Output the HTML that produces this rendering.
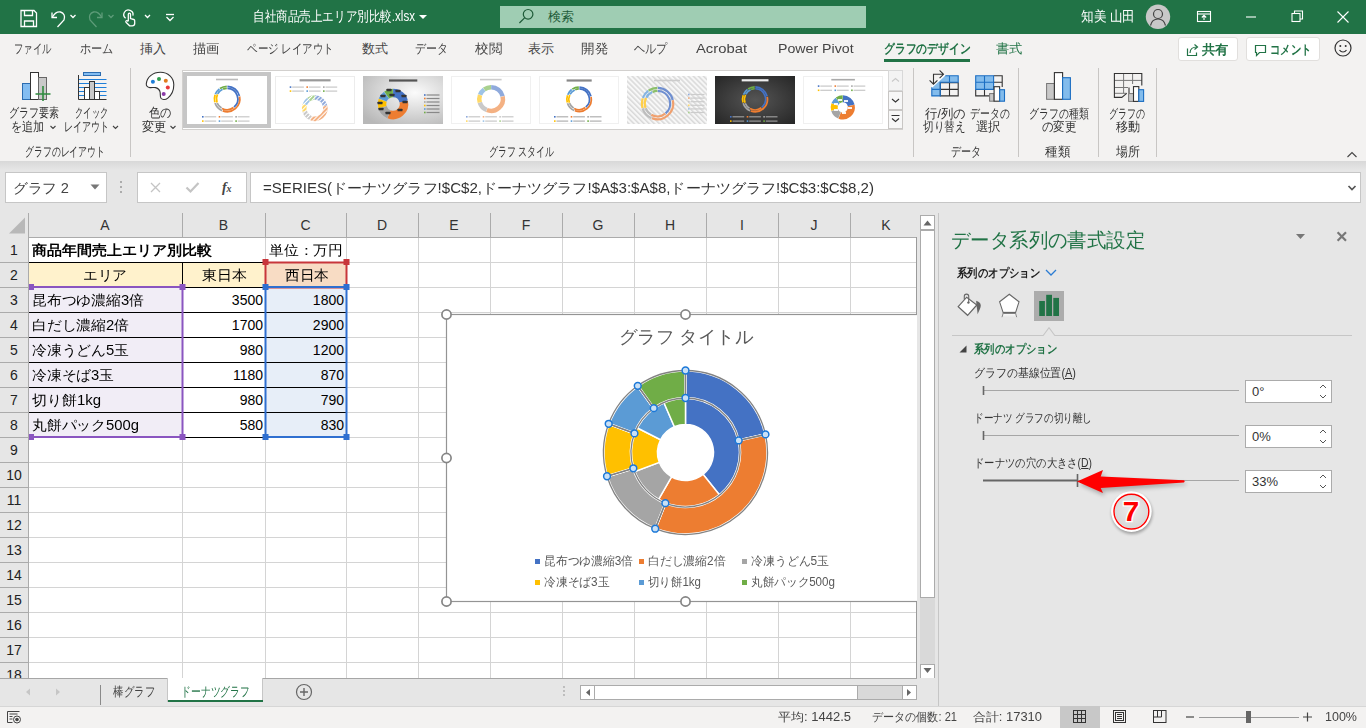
<!DOCTYPE html><html><head><meta charset="utf-8"><style>
html,body{margin:0;padding:0;width:1366px;height:728px;overflow:hidden;background:#f3f2f1;font-family:"Liberation Sans", sans-serif;}
div{position:absolute;box-sizing:border-box;}
svg{position:absolute;}
</style></head><body>
<div style="left:0px;top:0px;width:1366px;height:34px;background:#217346"></div>
<svg style="left:0;top:0" width="240" height="34" viewBox="0 0 240 34">
<g fill="none" stroke="#fff" stroke-width="1.3">
<path d="M21 10.5h13l2.5 2.5v13.5h-15.5z"/><path d="M24.5 10.5v5h8v-5"/><path d="M24.5 26.5v-5.5h9v5.5"/>
<path d="M52 12.5v5h5"/><path d="M52.5 17c2-3.5 5-5.5 8-5 3.5 .8 5 4.5 3.5 8l-6.5 7"/>
<path d="M70.5 15l2.5 2.5 2.5-2.5"/>
<g stroke="#5e9c79"><path d="M102 12.5v5h-5"/><path d="M101.5 17c-2-3.5-5-5.5-8-5-3.5 .8-5 4.5-3.5 8l6.5 7"/><path d="M108.5 15l2.5 2.5 2.5-2.5"/></g>
<path d="M125.6 18.2a4.6 4.6 0 1 1 7.3-2.6"/><path d="M128.3 21.2V14.3a1.1 1.1 0 0 1 2.2 0V18.6l3.3 .9a1.2 1.2 0 0 1 .9 1.2V23.6a2.4 2.4 0 0 1-2.4 2.2H129.6l-3.6-3.6a1 1 0 0 1 1.4-1.4l.9 .8"/>
<path d="M145 15l2.5 2.5 2.5-2.5"/>
<path d="M166 14.5h8"/><path d="M166.5 17l3.5 3.5 3.5-3.5"/>
</g></svg>
<div class="t" style="left:253.0px;top:7px;height:18px;line-height:18px;white-space:nowrap;color:#fff;font-size:14px;transform:scaleX(0.8265);transform-origin:0 0">自社商品売上エリア別比較.xlsx</div>
<svg style="left:418;top:14px" width="10" height="6"><path d="M1 1l4 4 4-4z" fill="#fff"/></svg>
<div style="left:500px;top:6px;width:366px;height:22px;background:#9fcdb3"></div>
<svg style="left:518px;top:7px" width="18" height="18" viewBox="0 0 18 18"><g fill="none" stroke="#1d5a37" stroke-width="1.2"><circle cx="10.1" cy="7.3" r="4.8"/><path d="M6.6 10.8L1.4 16"/></g></svg>
<div class="t" style="left:548.0px;top:8px;height:18px;line-height:18px;white-space:nowrap;color:#1d5a37;font-size:13px;transform:scaleX(1.0000);transform-origin:0 0">検索</div>
<div class="t" style="left:1081.0px;top:7px;height:18px;line-height:18px;white-space:nowrap;color:#fff;font-size:14px;transform:scaleX(0.9016);transform-origin:0 0">知美 山田</div>
<svg style="left:1140px;top:4px" width="36" height="26" viewBox="0 0 36 26"><circle cx="18" cy="12.8" r="12.2" fill="#c8c8c8"/><g fill="none" stroke="#444" stroke-width="1.2"><circle cx="18" cy="10" r="4.5"/><path d="M10.5 21.5c1-4.5 4-6.5 7.5-6.5s6.5 2 7.5 6.5"/></g></svg>
<svg style="left:1180px;top:0" width="186" height="34" viewBox="1180 0 186 34"><g fill="none" stroke="#fff" stroke-width="1.1">
<rect x="1197.5" y="11.5" width="13" height="10"/><path d="M1197.5 14h13"/><path d="M1204 20v-4.5M1201.8 17.5l2.2-2.2 2.2 2.2"/>
<path d="M1246 17h10"/>
<rect x="1292" y="13.5" width="8" height="8"/><path d="M1294.5 13.5v-2.5h8v8h-2.5"/>
<path d="M1337.5 11.5l11 11M1348.5 11.5l-11 11"/>
</g></svg>
<div class="t" style="left:13.5px;top:40px;height:18px;line-height:18px;white-space:nowrap;color:#444;font-size:13px;transform:scaleX(0.7231);transform-origin:0 0">ファイル</div>
<div class="t" style="left:79.5px;top:40px;height:18px;line-height:18px;white-space:nowrap;color:#444;font-size:13px;transform:scaleX(0.8641);transform-origin:0 0">ホーム</div>
<div class="t" style="left:139.5px;top:40px;height:18px;line-height:18px;white-space:nowrap;color:#444;font-size:13px;transform:scaleX(1.0000);transform-origin:0 0">挿入</div>
<div class="t" style="left:192.5px;top:40px;height:18px;line-height:18px;white-space:nowrap;color:#444;font-size:13px;transform:scaleX(1.0192);transform-origin:0 0">描画</div>
<div class="t" style="left:246.9px;top:40px;height:18px;line-height:18px;white-space:nowrap;color:#444;font-size:13px;transform:scaleX(0.8084);transform-origin:0 0">ページ レイアウト</div>
<div class="t" style="left:362.3px;top:40px;height:18px;line-height:18px;white-space:nowrap;color:#444;font-size:13px;transform:scaleX(1.0000);transform-origin:0 0">数式</div>
<div class="t" style="left:414.5px;top:40px;height:18px;line-height:18px;white-space:nowrap;color:#444;font-size:13px;transform:scaleX(0.8462);transform-origin:0 0">データ</div>
<div class="t" style="left:474.5px;top:40px;height:18px;line-height:18px;white-space:nowrap;color:#444;font-size:13px;transform:scaleX(1.0385);transform-origin:0 0">校閲</div>
<div class="t" style="left:527.5px;top:40px;height:18px;line-height:18px;white-space:nowrap;color:#444;font-size:13px;transform:scaleX(1.0000);transform-origin:0 0">表示</div>
<div class="t" style="left:580.5px;top:40px;height:18px;line-height:18px;white-space:nowrap;color:#444;font-size:13px;transform:scaleX(1.0385);transform-origin:0 0">開発</div>
<div class="t" style="left:633.5px;top:40px;height:18px;line-height:18px;white-space:nowrap;color:#444;font-size:13px;transform:scaleX(0.8590);transform-origin:0 0">ヘルプ</div>
<div class="t" style="left:695.5px;top:40px;height:18px;line-height:18px;white-space:nowrap;color:#444;font-size:13px;transform:scaleX(1.1381);transform-origin:0 0">Acrobat</div>
<div class="t" style="left:777.5px;top:40px;height:18px;line-height:18px;white-space:nowrap;color:#444;font-size:13px;transform:scaleX(1.0897);transform-origin:0 0">Power Pivot</div>
<div class="t" style="left:883.5px;top:40px;height:18px;line-height:18px;white-space:nowrap;color:#217346;font-size:13px;font-weight:bold;transform:scaleX(0.8317);transform-origin:0 0">グラフのデザイン</div>
<div style="left:884px;top:59px;width:86px;height:3px;background:#217346"></div>
<div class="t" style="left:995.5px;top:40px;height:18px;line-height:18px;white-space:nowrap;color:#217346;font-size:13px;transform:scaleX(1.0192);transform-origin:0 0">書式</div>
<div style="left:1178px;top:37px;width:60px;height:24px;background:#fff;border:1px solid #e1dfdd;border-radius:3px"></div>
<svg style="left:1185px;top:42px" width="16" height="16" viewBox="0 0 16 16"><g fill="none" stroke="#217346" stroke-width="1.2"><path d="M2.5 6.5v7h9v-3"/><path d="M5 11c0-4 3-6 7-6"/><path d="M9.5 2.5l3 2.5-3 2.5"/></g></svg>
<div class="t" style="left:1201.5px;top:41px;height:18px;line-height:18px;white-space:nowrap;color:#217346;font-size:13px;font-weight:bold;transform:scaleX(1.0192);transform-origin:0 0">共有</div>
<div style="left:1246px;top:37px;width:74px;height:24px;background:#fff;border:1px solid #e1dfdd;border-radius:3px"></div>
<svg style="left:1253px;top:42px" width="16" height="16" viewBox="0 0 16 16"><g fill="none" stroke="#217346" stroke-width="1.2"><path d="M2.5 3.5h10v7h-6l-3 3v-3h-1z"/></g></svg>
<div class="t" style="left:1269.5px;top:41px;height:18px;line-height:18px;white-space:nowrap;color:#217346;font-size:13px;font-weight:bold;transform:scaleX(0.7981);transform-origin:0 0">コメント</div>
<svg style="left:1333px;top:38px" width="20" height="20" viewBox="0 0 20 20"><g fill="none" stroke="#333" stroke-width="1.2"><circle cx="10" cy="10" r="8"/><path d="M6.5 12c1 1.5 2 2 3.5 2s2.5-.5 3.5-2"/></g><circle cx="7.3" cy="8" r="1" fill="#333"/><circle cx="12.7" cy="8" r="1" fill="#333"/></svg>
<div style="left:130px;top:68px;width:1px;height:89px;background:#c8c6c4"></div>
<div style="left:913px;top:68px;width:1px;height:89px;background:#c8c6c4"></div>
<div style="left:1018px;top:68px;width:1px;height:89px;background:#c8c6c4"></div>
<div style="left:1098px;top:68px;width:1px;height:89px;background:#c8c6c4"></div>
<div style="left:1156px;top:68px;width:1px;height:89px;background:#c8c6c4"></div>
<div class="t" style="left:24.5px;top:144px;height:16px;line-height:16px;white-space:nowrap;color:#333;font-size:13px;transform:scaleX(0.6846);transform-origin:0 0">グラフのレイアウト</div>
<div class="t" style="left:488.7px;top:144px;height:16px;line-height:16px;white-space:nowrap;color:#333;font-size:13px;transform:scaleX(0.6901);transform-origin:0 0">グラフ スタイル</div>
<div class="t" style="left:950.9px;top:143.5px;height:16px;line-height:16px;white-space:nowrap;color:#333;font-size:13px;transform:scaleX(0.7744);transform-origin:0 0">データ</div>
<div class="t" style="left:1045.3px;top:143.5px;height:16px;line-height:16px;white-space:nowrap;color:#333;font-size:13px;transform:scaleX(0.9692);transform-origin:0 0">種類</div>
<div class="t" style="left:1115.5px;top:143.5px;height:16px;line-height:16px;white-space:nowrap;color:#333;font-size:13px;transform:scaleX(0.9231);transform-origin:0 0">場所</div>
<div class="t" style="left:9.3px;top:105px;height:16px;line-height:16px;white-space:nowrap;color:#333;font-size:13px;transform:scaleX(0.7723);transform-origin:0 0">グラフ要素</div>
<div class="t" style="left:11.4px;top:119px;height:16px;line-height:16px;white-space:nowrap;color:#333;font-size:13px;transform:scaleX(0.8487);transform-origin:0 0">を追加</div>
<div class="t" style="left:75.3px;top:105px;height:16px;line-height:16px;white-space:nowrap;color:#333;font-size:13px;transform:scaleX(0.6385);transform-origin:0 0">クイック</div>
<div class="t" style="left:63.6px;top:119px;height:16px;line-height:16px;white-space:nowrap;color:#333;font-size:13px;transform:scaleX(0.6954);transform-origin:0 0">レイアウト</div>
<div class="t" style="left:148.7px;top:105px;height:16px;line-height:16px;white-space:nowrap;color:#333;font-size:13px;transform:scaleX(0.8654);transform-origin:0 0">色の</div>
<div class="t" style="left:141.5px;top:119px;height:16px;line-height:16px;white-space:nowrap;color:#333;font-size:13px;transform:scaleX(0.9385);transform-origin:0 0">変更</div>
<div class="t" style="left:924.5px;top:105.5px;height:16px;line-height:16px;white-space:nowrap;color:#333;font-size:13px;transform:scaleX(0.9525);transform-origin:0 0">行/列の</div>
<div class="t" style="left:923.4px;top:119px;height:16px;line-height:16px;white-space:nowrap;color:#333;font-size:13px;transform:scaleX(0.8135);transform-origin:0 0">切り替え</div>
<div class="t" style="left:969.5px;top:105.5px;height:16px;line-height:16px;white-space:nowrap;color:#333;font-size:13px;transform:scaleX(0.7596);transform-origin:0 0">データの</div>
<div class="t" style="left:976.1px;top:119px;height:16px;line-height:16px;white-space:nowrap;color:#333;font-size:13px;transform:scaleX(0.9538);transform-origin:0 0">選択</div>
<div class="t" style="left:1028.5px;top:105.5px;height:16px;line-height:16px;white-space:nowrap;color:#333;font-size:13px;transform:scaleX(0.7628);transform-origin:0 0">グラフの種類</div>
<div class="t" style="left:1041.5px;top:119px;height:16px;line-height:16px;white-space:nowrap;color:#333;font-size:13px;transform:scaleX(0.8846);transform-origin:0 0">の変更</div>
<div class="t" style="left:1109.0px;top:105.5px;height:16px;line-height:16px;white-space:nowrap;color:#333;font-size:13px;transform:scaleX(0.6942);transform-origin:0 0">グラフの</div>
<div class="t" style="left:1115.5px;top:119px;height:16px;line-height:16px;white-space:nowrap;color:#333;font-size:13px;transform:scaleX(0.9308);transform-origin:0 0">移動</div>
<svg style="left:0;top:120px" width="200" height="14" viewBox="0 120 200 14"><g fill="none" stroke="#444" stroke-width="1.1"><path d="M50.5 126l2.5 2.5 2.5-2.5M113 126l2.5 2.5 2.5-2.5M170.5 126l2.5 2.5 2.5-2.5"/></g></svg>
<svg style="left:0;top:60px" width="200" height="45" viewBox="0 60 200 45">
<rect x="22.5" y="83.5" width="8" height="16" fill="#83bdf1" stroke="#2b6cb0" stroke-width="1"/>
<rect x="30.5" y="72.5" width="8" height="27" fill="#fff" stroke="#333" stroke-width="1"/>
<rect x="38.5" y="77.5" width="8" height="22" fill="#c9c9c9" stroke="#666" stroke-width="1"/>
<path d="M43 86v15M35.5 94h15" stroke="#2e8b3e" stroke-width="1.6"/>
<rect x="83.5" y="72.5" width="17" height="3" fill="#83bdf1" stroke="#2b6cb0" stroke-width="1"/>
<path d="M78.5 79.5h28M78.5 83.5h28M78.5 87.5h28M78.5 91.5h28M78.5 95.5h28" stroke="#1f7fd8" stroke-width="1"/>
<path d="M78.5 75v24.5h28" fill="none" stroke="#333" stroke-width="1"/>
<rect x="84.5" y="87.5" width="5" height="12" fill="#fff" stroke="#333"/>
<rect x="89.5" y="81.5" width="5" height="18" fill="#c9c9c9" stroke="#333"/>
<rect x="94.5" y="91.5" width="5" height="8" fill="#fff" stroke="#333"/>
<path d="M160.5 72.3c7.5 0 13.3 5.5 13.3 12.5c0 6-2.5 10.5-6 13.3c-2.2 1.8-5.5 2-6.8 .2c-1-1.5-.6-3.5-.8-5.5c-.3-2.5-1.8-4.5-4.5-5.2c-2-.5-4 .3-5.8 0c-2.3-.4-3.8-2-3.6-4c.6-6.3 6.3-11.3 14.2-11.3z" fill="#fff" stroke="#333" stroke-width="1.1"/>
<circle cx="152.9" cy="81.8" r="2" fill="#1f7fd8"/><circle cx="159" cy="78.9" r="2" fill="#2e9e4e"/><circle cx="165.8" cy="80.8" r="2" fill="#e07b1e"/><circle cx="167.8" cy="87.6" r="2" fill="#e8383c"/><circle cx="163.7" cy="93.9" r="2" fill="#8a3aa8"/>
</svg>
<svg style="left:920px;top:60px" width="240" height="45" viewBox="920 60 240 45">
<path d="M944 75.8H958.2V82.3H940.3V95.9H931.8V86.5z" fill="#83bcec"/>
<g fill="none" stroke="#333" stroke-width="1.1"><path d="M940.3 82.8H958.2V95.9H940.3zM949.5 82.8V95.9M940.3 89.4H958.2"/></g>
<g fill="none" stroke="#1b6ec2" stroke-width="1.1"><path d="M944 75.8H958.2V82.3H940.3V95.9H931.8V86.5M949.5 75.8V82.3M931.8 89.4H940.3"/></g>
<path d="M931.5 87.2L945 74.8" stroke="#fff" stroke-width="1.6"/>
<g fill="none" stroke="#333" stroke-width="1.1"><path d="M933.5 83.5V74.3H943.2M939.6 70.4L943.5 74.3L939.6 78.2M929.6 80.3L933.5 84.2L937.4 80.3"/></g>
<rect x="975.7" y="75.8" width="17.9" height="13.6" fill="#83bcec"/>
<g fill="none" stroke="#333" stroke-width="1.1"><path d="M993.6 75.8H1002.2V87M993.6 82.3H1002.2M975.7 89.4V95.9H989M984.5 89.4V95.9"/></g>
<g fill="none" stroke="#1b6ec2" stroke-width="1.1"><path d="M975.7 75.8H993.6V89.4H975.7zM984.5 75.8V89.4M975.7 82.3H993.6"/></g>
<rect x="989.6" y="93.6" width="4.5" height="7.6" fill="#c8c8c8" stroke="#777" stroke-width="1"/><rect x="994.1" y="86.7" width="5.5" height="14.5" fill="#fff" stroke="#333" stroke-width="1.1"/><rect x="999.7" y="89.7" width="4.8" height="11.5" fill="#83bcec" stroke="#1b6ec2" stroke-width="1.1"/>
<rect x="1046.6" y="83.5" width="7.8" height="15.8" fill="#c8c8c8" stroke="#777" stroke-width="1"/><rect x="1054.4" y="72.6" width="8.2" height="26.7" fill="#fff" stroke="#333" stroke-width="1.1"/><rect x="1062.6" y="77.7" width="7.8" height="21.6" fill="#83bcec" stroke="#1b6ec2" stroke-width="1.1"/>
<g fill="none" stroke="#777" stroke-width="1"><path d="M1123.6 73.5V93.3M1132.6 73.5V84M1114.4 80.4H1141.8M1114.4 87.5H1128M1114.4 93.3H1126.7"/></g>
<g fill="none" stroke="#333" stroke-width="1.1"><path d="M1129 93.3V87.5M1141.8 85.5V73.5H1114.4V97.4H1121.8L1126.7 93.3"/></g>
<rect x="1128.6" y="93.6" width="4.9" height="7.8" fill="#c8c8c8" stroke="#777" stroke-width="1"/><rect x="1133.5" y="86.6" width="5.3" height="14.8" fill="#fff" stroke="#333" stroke-width="1.1"/><rect x="1138.8" y="89.7" width="4.8" height="11.7" fill="#83bcec" stroke="#1b6ec2" stroke-width="1.1"/>
</svg>
<div style="left:182px;top:70px;width:721px;height:60px;background:#fff;border:1px solid #d2d0ce"></div>
<div style="left:183px;top:72px;width:88px;height:56px;background:#c6c6c6"></div>
<svg style="left:180px;top:70px" width="710" height="60" viewBox="180 70 710 60"><defs><radialGradient id="g3" cx="65%" cy="35%" r="80%"><stop offset="0" stop-color="#fbfbfb"/><stop offset="1" stop-color="#b8b8b8"/></radialGradient><radialGradient id="g7" cx="50%" cy="50%" r="70%"><stop offset="0" stop-color="#555"/><stop offset="1" stop-color="#262626"/></radialGradient><pattern id="st" width="3.6" height="3.6" patternUnits="userSpaceOnUse" patternTransform="rotate(-45)"><rect width="3.6" height="3.6" fill="#f7f7f7"/><rect width="1.5" height="3.6" fill="#d9d9d9"/></pattern><pattern id="hx" width="3" height="3" patternUnits="userSpaceOnUse" patternTransform="rotate(45)"><rect width="3" height="3" fill="#fff" opacity="0"/><rect width="1" height="3" fill="#fff"/></pattern></defs>
<rect x="187" y="76" width="80" height="48" fill="#fff"/><rect x="216" y="78.7" width="22" height="1.6" fill="#bbb"/><path d="M227.38 88.30A10.7 10.7 0 0 1 234.01 107.17" stroke="#4472c4" stroke-width="1.8" fill="none"/><path d="M233.58 107.52A10.7 10.7 0 0 1 222.02 108.42" stroke="#ed7d31" stroke-width="1.8" fill="none"/><path d="M221.53 108.14A10.7 10.7 0 0 1 217.18 103.02" stroke="#a5a5a5" stroke-width="1.8" fill="none"/><path d="M216.99 102.50A10.7 10.7 0 0 1 217.45 94.39" stroke="#ffc000" stroke-width="1.8" fill="none"/><path d="M217.70 93.89A10.7 10.7 0 0 1 222.59 89.30" stroke="#5b9bd5" stroke-width="1.8" fill="none"/><path d="M223.11 89.07A10.7 10.7 0 0 1 226.82 88.30" stroke="#70ad47" stroke-width="1.8" fill="none"/><path d="M227.43 86.30A12.7 12.7 0 0 1 239.41 95.87" stroke="#4472c4" stroke-width="1.8" fill="none"/><path d="M239.56 96.52A12.7 12.7 0 0 1 222.72 110.92" stroke="#ed7d31" stroke-width="1.8" fill="none"/><path d="M222.10 110.68A12.7 12.7 0 0 1 215.05 103.00" stroke="#a5a5a5" stroke-width="1.8" fill="none"/><path d="M214.85 102.36A12.7 12.7 0 0 1 215.09 94.87" stroke="#ffc000" stroke-width="1.8" fill="none"/><path d="M215.32 94.24A12.7 12.7 0 0 1 219.44 88.87" stroke="#5b9bd5" stroke-width="1.8" fill="none"/><path d="M219.98 88.49A12.7 12.7 0 0 1 226.77 86.30" stroke="#70ad47" stroke-width="1.8" fill="none"/><rect x="202.0" y="116.0" width="1.6" height="1.6" fill="#4472c4"/><rect x="204.5" y="116.2" width="11.7" height="1.2" fill="#c8c8c8"/><rect x="218.7" y="116.0" width="1.6" height="1.6" fill="#ed7d31"/><rect x="221.2" y="116.2" width="11.7" height="1.2" fill="#c8c8c8"/><rect x="235.3" y="116.0" width="1.6" height="1.6" fill="#a5a5a5"/><rect x="237.8" y="116.2" width="11.7" height="1.2" fill="#c8c8c8"/><rect x="202.0" y="120.3" width="1.6" height="1.6" fill="#ffc000"/><rect x="204.5" y="120.5" width="11.7" height="1.2" fill="#c8c8c8"/><rect x="218.7" y="120.3" width="1.6" height="1.6" fill="#5b9bd5"/><rect x="221.2" y="120.5" width="11.7" height="1.2" fill="#c8c8c8"/><rect x="235.3" y="120.3" width="1.6" height="1.6" fill="#70ad47"/><rect x="237.8" y="120.5" width="11.7" height="1.2" fill="#c8c8c8"/><rect x="275.5" y="76.5" width="79" height="47" fill="#fff" stroke="#ececec"/><rect x="299.6" y="79.2" width="31.0" height="2.2" fill="#9a9a9a"/><rect x="289.7" y="86.3" width="1.6" height="1.6" fill="#4472c4"/><rect x="292.2" y="86.5" width="11.7" height="1.2" fill="#c8c8c8"/><rect x="306.4" y="86.3" width="1.6" height="1.6" fill="#ed7d31"/><rect x="308.9" y="86.5" width="11.7" height="1.2" fill="#c8c8c8"/><rect x="323.0" y="86.3" width="1.6" height="1.6" fill="#a5a5a5"/><rect x="325.5" y="86.5" width="11.7" height="1.2" fill="#c8c8c8"/><rect x="289.7" y="90.3" width="1.6" height="1.6" fill="#ffc000"/><rect x="292.2" y="90.5" width="11.7" height="1.2" fill="#c8c8c8"/><rect x="306.4" y="90.3" width="1.6" height="1.6" fill="#5b9bd5"/><rect x="308.9" y="90.5" width="11.7" height="1.2" fill="#c8c8c8"/><rect x="323.0" y="90.3" width="1.6" height="1.6" fill="#70ad47"/><rect x="325.5" y="90.5" width="11.7" height="1.2" fill="#c8c8c8"/><path d="M314.95 97.60A10.6 10.6 0 0 1 325.10 105.71" stroke="#8faadc" stroke-width="4.5" fill="none"/><path d="M325.17 106.00A10.6 10.6 0 0 1 311.02 118.10" stroke="#f4b183" stroke-width="4.5" fill="none"/><path d="M310.75 118.00A10.6 10.6 0 0 1 304.70 111.41" stroke="#c9c9c9" stroke-width="4.5" fill="none"/><path d="M304.61 111.13A10.6 10.6 0 0 1 304.82 104.63" stroke="#ffd966" stroke-width="4.5" fill="none"/><path d="M304.92 104.35A10.6 10.6 0 0 1 308.51 99.67" stroke="#9dc3e6" stroke-width="4.5" fill="none"/><path d="M308.75 99.50A10.6 10.6 0 0 1 314.65 97.60" stroke="#a9d18e" stroke-width="4.5" fill="none"/><circle cx="314.8" cy="108.2" r="10.6" fill="none" stroke="url(#hx)" stroke-width="4.5"/><rect x="363" y="76" width="80" height="48" fill="url(#g3)"/><rect x="389" y="79.4" width="28.30000000000001" height="2.2" fill="#555"/><path d="M393.10 93.00A11 11 0 0 1 403.71 101.48" stroke="#4472c4" stroke-width="8.5" fill="none"/><path d="M403.75 101.66A11 11 0 0 1 389.03 114.26" stroke="#ed7d31" stroke-width="8.5" fill="none"/><path d="M388.85 114.19A11 11 0 0 1 382.50 107.28" stroke="#a5a5a5" stroke-width="8.5" fill="none"/><path d="M382.44 107.09A11 11 0 0 1 382.66 100.24" stroke="#ffc000" stroke-width="8.5" fill="none"/><path d="M382.73 100.06A11 11 0 0 1 386.52 95.11" stroke="#5b9bd5" stroke-width="8.5" fill="none"/><path d="M386.67 95.00A11 11 0 0 1 392.90 93.00" stroke="#70ad47" stroke-width="8.5" fill="none"/><rect x="386.5" y="88.7" width="5" height="2.6" rx="0.6" fill="#333"/><rect x="395.5" y="89.7" width="5" height="2.6" rx="0.6" fill="#333"/><rect x="401.5" y="94.7" width="5" height="2.6" rx="0.6" fill="#333"/><rect x="402.5" y="100.7" width="5" height="2.6" rx="0.6" fill="#333"/><rect x="397.5" y="108.7" width="5" height="2.6" rx="0.6" fill="#333"/><rect x="385.5" y="111.7" width="5" height="2.6" rx="0.6" fill="#333"/><rect x="378.5" y="107.7" width="5" height="2.6" rx="0.6" fill="#333"/><rect x="377.5" y="101.7" width="5" height="2.6" rx="0.6" fill="#333"/><rect x="380.5" y="94.7" width="5" height="2.6" rx="0.6" fill="#333"/><rect x="389.5" y="93.7" width="5" height="2.6" rx="0.6" fill="#333"/><rect x="424" y="94.2" width="1.6" height="1.6" fill="#4472c4"/><rect x="426.5" y="94.4" width="13" height="1.2" fill="#888"/><rect x="424" y="97.7" width="1.6" height="1.6" fill="#ed7d31"/><rect x="426.5" y="97.9" width="13" height="1.2" fill="#888"/><rect x="424" y="101.2" width="1.6" height="1.6" fill="#a5a5a5"/><rect x="426.5" y="101.4" width="13" height="1.2" fill="#888"/><rect x="424" y="104.7" width="1.6" height="1.6" fill="#ffc000"/><rect x="426.5" y="104.9" width="13" height="1.2" fill="#888"/><rect x="424" y="108.2" width="1.6" height="1.6" fill="#5b9bd5"/><rect x="426.5" y="108.4" width="13" height="1.2" fill="#888"/><rect x="424" y="111.7" width="1.6" height="1.6" fill="#70ad47"/><rect x="426.5" y="111.9" width="13" height="1.2" fill="#888"/><rect x="451.5" y="76.5" width="79" height="47" fill="#fff" stroke="#f0f0f0"/><rect x="480" y="78.8" width="21.600000000000023" height="1.6" fill="#ccc"/><path d="M491.18 87.20A11.8 11.8 0 0 1 502.59 96.31" stroke="#8faadc" stroke-width="4.5" fill="none"/><path d="M502.63 96.47A11.8 11.8 0 0 1 486.82 110.00" stroke="#f4b183" stroke-width="4.5" fill="none"/><path d="M486.67 109.94A11.8 11.8 0 0 1 479.83 102.50" stroke="#c9c9c9" stroke-width="4.5" fill="none"/><path d="M479.78 102.34A11.8 11.8 0 0 1 480.02 94.95" stroke="#ffd966" stroke-width="4.5" fill="none"/><path d="M480.08 94.79A11.8 11.8 0 0 1 484.16 89.46" stroke="#9dc3e6" stroke-width="4.5" fill="none"/><path d="M484.30 89.36A11.8 11.8 0 0 1 491.02 87.20" stroke="#a9d18e" stroke-width="4.5" fill="none"/><rect x="466.0" y="116.0" width="1.6" height="1.6" fill="#8faadc"/><rect x="468.5" y="116.2" width="11.7" height="1.2" fill="#c8c8c8"/><rect x="482.7" y="116.0" width="1.6" height="1.6" fill="#f4b183"/><rect x="485.2" y="116.2" width="11.7" height="1.2" fill="#c8c8c8"/><rect x="499.3" y="116.0" width="1.6" height="1.6" fill="#c9c9c9"/><rect x="501.8" y="116.2" width="11.7" height="1.2" fill="#c8c8c8"/><rect x="466.0" y="120.3" width="1.6" height="1.6" fill="#ffd966"/><rect x="468.5" y="120.5" width="11.7" height="1.2" fill="#c8c8c8"/><rect x="482.7" y="120.3" width="1.6" height="1.6" fill="#9dc3e6"/><rect x="485.2" y="120.5" width="11.7" height="1.2" fill="#c8c8c8"/><rect x="499.3" y="120.3" width="1.6" height="1.6" fill="#a9d18e"/><rect x="501.8" y="120.5" width="11.7" height="1.2" fill="#c8c8c8"/><rect x="539.5" y="76.5" width="79" height="47" fill="#fff" stroke="#f0f0f0"/><rect x="566.6" y="79.4" width="25.100000000000023" height="2.2" fill="#888"/><path d="M579.37 88.95A10.35 10.35 0 0 1 585.79 107.20" stroke="#4472c4" stroke-width="1.71" fill="none"/><path d="M585.36 107.54A10.35 10.35 0 0 1 574.18 108.41" stroke="#ed7d31" stroke-width="1.71" fill="none"/><path d="M573.71 108.14A10.35 10.35 0 0 1 569.51 103.19" stroke="#a5a5a5" stroke-width="1.71" fill="none"/><path d="M569.32 102.68A10.35 10.35 0 0 1 569.76 94.84" stroke="#ffc000" stroke-width="1.71" fill="none"/><path d="M570.01 94.36A10.35 10.35 0 0 1 574.74 89.91" stroke="#5b9bd5" stroke-width="1.71" fill="none"/><path d="M575.24 89.70A10.35 10.35 0 0 1 578.83 88.95" stroke="#70ad47" stroke-width="1.71" fill="none"/><path d="M579.42 87.05A12.25 12.25 0 0 1 590.97 96.28" stroke="#4472c4" stroke-width="1.71" fill="none"/><path d="M591.11 96.91A12.25 12.25 0 0 1 574.88 110.80" stroke="#ed7d31" stroke-width="1.71" fill="none"/><path d="M574.28 110.56A12.25 12.25 0 0 1 567.47 103.15" stroke="#a5a5a5" stroke-width="1.71" fill="none"/><path d="M567.29 102.54A12.25 12.25 0 0 1 567.52 95.31" stroke="#ffc000" stroke-width="1.71" fill="none"/><path d="M567.74 94.71A12.25 12.25 0 0 1 571.71 89.53" stroke="#5b9bd5" stroke-width="1.71" fill="none"/><path d="M572.23 89.16A12.25 12.25 0 0 1 578.78 87.05" stroke="#70ad47" stroke-width="1.71" fill="none"/><rect x="554.0" y="116.0" width="1.6" height="1.6" fill="#4472c4"/><rect x="556.5" y="116.2" width="11.7" height="1.2" fill="#b0b0b0"/><rect x="570.7" y="116.0" width="1.6" height="1.6" fill="#ed7d31"/><rect x="573.2" y="116.2" width="11.7" height="1.2" fill="#b0b0b0"/><rect x="587.3" y="116.0" width="1.6" height="1.6" fill="#a5a5a5"/><rect x="589.8" y="116.2" width="11.7" height="1.2" fill="#b0b0b0"/><rect x="554.0" y="120.3" width="1.6" height="1.6" fill="#ffc000"/><rect x="556.5" y="120.5" width="11.7" height="1.2" fill="#b0b0b0"/><rect x="570.7" y="120.3" width="1.6" height="1.6" fill="#5b9bd5"/><rect x="573.2" y="120.5" width="11.7" height="1.2" fill="#b0b0b0"/><rect x="587.3" y="120.3" width="1.6" height="1.6" fill="#70ad47"/><rect x="589.8" y="120.5" width="11.7" height="1.2" fill="#b0b0b0"/><rect x="627" y="76" width="80" height="48" fill="url(#st)"/><rect x="654" y="79.7" width="26" height="1.6" fill="#ccc"/><path d="M657.72 87.90A15.7 15.7 0 0 1 672.76 99.92" stroke="#6f8fd0" stroke-width="2.2" fill="none"/><path d="M672.86 100.35A15.7 15.7 0 0 1 651.91 118.27" stroke="#f0a06e" stroke-width="2.2" fill="none"/><path d="M651.50 118.11A15.7 15.7 0 0 1 642.54 108.36" stroke="#bdbdbd" stroke-width="2.2" fill="none"/><path d="M642.41 107.94A15.7 15.7 0 0 1 642.72 98.31" stroke="#ffcf4a" stroke-width="2.2" fill="none"/><path d="M642.87 97.90A15.7 15.7 0 0 1 648.18 90.97" stroke="#84b4e2" stroke-width="2.2" fill="none"/><path d="M648.54 90.71A15.7 15.7 0 0 1 657.28 87.90" stroke="#8cc06a" stroke-width="2.2" fill="none"/><path d="M657.68 90.90A12.7 12.7 0 0 1 665.59 113.39" stroke="#6f8fd0" stroke-width="2.2" fill="none"/><path d="M665.31 113.62A12.7 12.7 0 0 1 651.33 114.70" stroke="#f0a06e" stroke-width="2.2" fill="none"/><path d="M651.02 114.52A12.7 12.7 0 0 1 645.67 108.23" stroke="#bdbdbd" stroke-width="2.2" fill="none"/><path d="M645.55 107.90A12.7 12.7 0 0 1 646.11 97.98" stroke="#ffcf4a" stroke-width="2.2" fill="none"/><path d="M646.27 97.67A12.7 12.7 0 0 1 652.29 92.02" stroke="#84b4e2" stroke-width="2.2" fill="none"/><path d="M652.62 91.88A12.7 12.7 0 0 1 657.32 90.90" stroke="#8cc06a" stroke-width="2.2" fill="none"/><rect x="688" y="93.7" width="1.6" height="1.6" fill="#8faadc"/><rect x="690.5" y="93.9" width="14" height="1.2" fill="#ccc"/><rect x="688" y="97.3" width="1.6" height="1.6" fill="#f4b183"/><rect x="690.5" y="97.5" width="14" height="1.2" fill="#ccc"/><rect x="688" y="100.9" width="1.6" height="1.6" fill="#c9c9c9"/><rect x="690.5" y="101.1" width="14" height="1.2" fill="#ccc"/><rect x="688" y="104.5" width="1.6" height="1.6" fill="#ffd966"/><rect x="690.5" y="104.7" width="14" height="1.2" fill="#ccc"/><rect x="688" y="108.1" width="1.6" height="1.6" fill="#9dc3e6"/><rect x="690.5" y="108.3" width="14" height="1.2" fill="#ccc"/><rect x="688" y="111.7" width="1.6" height="1.6" fill="#a9d18e"/><rect x="690.5" y="111.9" width="14" height="1.2" fill="#ccc"/><rect x="715" y="76" width="80" height="48" fill="url(#g7)"/><rect x="741.7" y="79.2" width="26.799999999999955" height="2.2" fill="#eee"/><path d="M755.28 88.75A10.55 10.55 0 0 1 761.82 107.35" stroke="#4472c4" stroke-width="1.71" fill="none"/><path d="M761.39 107.70A10.55 10.55 0 0 1 749.99 108.58" stroke="#ed7d31" stroke-width="1.71" fill="none"/><path d="M749.51 108.31A10.55 10.55 0 0 1 745.22 103.27" stroke="#a5a5a5" stroke-width="1.71" fill="none"/><path d="M745.03 102.75A10.55 10.55 0 0 1 745.48 94.75" stroke="#ffc000" stroke-width="1.71" fill="none"/><path d="M745.73 94.26A10.55 10.55 0 0 1 750.56 89.73" stroke="#5b9bd5" stroke-width="1.71" fill="none"/><path d="M751.06 89.51A10.55 10.55 0 0 1 754.72 88.75" stroke="#70ad47" stroke-width="1.71" fill="none"/><path d="M755.33 86.85A12.450000000000001 12.450000000000001 0 0 1 767.07 96.23" stroke="#4472c4" stroke-width="1.71" fill="none"/><path d="M767.21 96.87A12.450000000000001 12.450000000000001 0 0 1 750.71 110.99" stroke="#ed7d31" stroke-width="1.71" fill="none"/><path d="M750.10 110.75A12.450000000000001 12.450000000000001 0 0 1 743.18 103.22" stroke="#a5a5a5" stroke-width="1.71" fill="none"/><path d="M742.99 102.59A12.450000000000001 12.450000000000001 0 0 1 743.23 95.25" stroke="#ffc000" stroke-width="1.71" fill="none"/><path d="M743.46 94.64A12.450000000000001 12.450000000000001 0 0 1 747.49 89.37" stroke="#5b9bd5" stroke-width="1.71" fill="none"/><path d="M748.02 88.99A12.450000000000001 12.450000000000001 0 0 1 754.67 86.85" stroke="#70ad47" stroke-width="1.71" fill="none"/><rect x="730.0" y="116.0" width="1.6" height="1.6" fill="#4472c4"/><rect x="732.5" y="116.2" width="11.7" height="1.2" fill="#999"/><rect x="746.7" y="116.0" width="1.6" height="1.6" fill="#ed7d31"/><rect x="749.2" y="116.2" width="11.7" height="1.2" fill="#999"/><rect x="763.3" y="116.0" width="1.6" height="1.6" fill="#a5a5a5"/><rect x="765.8" y="116.2" width="11.7" height="1.2" fill="#999"/><rect x="730.0" y="120.3" width="1.6" height="1.6" fill="#ffc000"/><rect x="732.5" y="120.5" width="11.7" height="1.2" fill="#999"/><rect x="746.7" y="120.3" width="1.6" height="1.6" fill="#5b9bd5"/><rect x="749.2" y="120.5" width="11.7" height="1.2" fill="#999"/><rect x="763.3" y="120.3" width="1.6" height="1.6" fill="#70ad47"/><rect x="765.8" y="120.5" width="11.7" height="1.2" fill="#999"/><rect x="803.5" y="76.5" width="79" height="47" fill="#fff" stroke="#f0f0f0"/><rect x="831.3" y="78.9" width="23.600000000000023" height="1.6" fill="#aaa"/><rect x="817.8" y="85.3" width="1.6" height="1.6" fill="#4472c4"/><rect x="820.3" y="85.5" width="11.7" height="1.2" fill="#c8c8c8"/><rect x="834.5" y="85.3" width="1.6" height="1.6" fill="#ed7d31"/><rect x="837.0" y="85.5" width="11.7" height="1.2" fill="#c8c8c8"/><rect x="851.1" y="85.3" width="1.6" height="1.6" fill="#a5a5a5"/><rect x="853.6" y="85.5" width="11.7" height="1.2" fill="#c8c8c8"/><rect x="817.8" y="89.5" width="1.6" height="1.6" fill="#ffc000"/><rect x="820.3" y="89.7" width="11.7" height="1.2" fill="#c8c8c8"/><rect x="834.5" y="89.5" width="1.6" height="1.6" fill="#5b9bd5"/><rect x="837.0" y="89.7" width="11.7" height="1.2" fill="#c8c8c8"/><rect x="851.1" y="89.5" width="1.6" height="1.6" fill="#70ad47"/><rect x="853.6" y="89.7" width="11.7" height="1.2" fill="#c8c8c8"/><path d="M842.89 98.80A8.6 8.6 0 0 1 851.17 105.41" stroke="#4472c4" stroke-width="7" fill="none"/><path d="M851.21 105.59A8.6 8.6 0 0 1 839.71 115.43" stroke="#ed7d31" stroke-width="7" fill="none"/><path d="M839.54 115.36A8.6 8.6 0 0 1 834.60 109.98" stroke="#a5a5a5" stroke-width="7" fill="none"/><path d="M834.54 109.81A8.6 8.6 0 0 1 834.71 104.47" stroke="#ffc000" stroke-width="7" fill="none"/><path d="M834.78 104.31A8.6 8.6 0 0 1 837.72 100.46" stroke="#5b9bd5" stroke-width="7" fill="none"/><path d="M837.87 100.36A8.6 8.6 0 0 1 842.71 98.80" stroke="#70ad47" stroke-width="7" fill="none"/><rect x="844" y="100" width="4" height="2" fill="#fff" opacity="0.9"/><rect x="848" y="107" width="4" height="2" fill="#fff" opacity="0.9"/><rect x="842" y="112" width="4" height="2" fill="#fff" opacity="0.9"/><rect x="834" y="109" width="4" height="2" fill="#fff" opacity="0.9"/><rect x="834" y="103" width="4" height="2" fill="#fff" opacity="0.9"/><rect x="838" y="99" width="4" height="2" fill="#fff" opacity="0.9"/>
</svg>
<div style="left:888px;top:70px;width:15px;height:21px;background:#f3f3f3;border:1px solid #d8d8d8"></div>
<div style="left:888px;top:91px;width:15px;height:19px;background:#f7f7f7;border:1px solid #c8c6c4"></div>
<div style="left:888px;top:110px;width:15px;height:19px;background:#f7f7f7;border:1px solid #c8c6c4"></div>
<svg style="left:887px;top:70px" width="16" height="60" viewBox="887 70 16 60"><g fill="none" stroke-width="1.1">
<path d="M892 81.5l3.5-3 3.5 3" stroke="#c8c8c8"/><path d="M892 99l3.5 3 3.5-3" stroke="#333"/><path d="M891.5 115.5h8M892 118.5l3.5 3 3.5-3" stroke="#333"/></g></svg>
<svg style="left:1345px;top:150px" width="14" height="10"><path d="M2.5 7l4.5-4.5 4.5 4.5" fill="none" stroke="#444" stroke-width="1.1"/></svg>
<div style="left:0px;top:161px;width:1366px;height:52px;background:#e6e6e6"></div>
<div style="left:0px;top:161px;width:1366px;height:9px;background:linear-gradient(#d8d8d8,#e6e6e6)"></div>
<div style="left:5px;top:172px;width:102px;height:31px;background:#fff;border:1px solid #c6c6c6"></div>
<div class="t" style="left:13.0px;top:179px;height:18px;line-height:18px;white-space:nowrap;color:#444;font-size:14px;transform:scaleX(1.0431);transform-origin:0 0">グラフ 2</div>
<svg style="left:90px;top:184px" width="10" height="6"><path d="M0.5 0.5h9l-4.5 5z" fill="#777"/></svg>
<svg style="left:119px;top:180px" width="4" height="16"><circle cx="2" cy="2" r="1" fill="#999"/><circle cx="2" cy="7" r="1" fill="#999"/><circle cx="2" cy="12" r="1" fill="#999"/></svg>
<div style="left:137px;top:172px;width:110px;height:31px;background:#fff;border:1px solid #c6c6c6"></div>
<svg style="left:137px;top:172px" width="110" height="31" viewBox="137 172 110 31"><g fill="none" stroke="#c4c4c4"><path d="M151 183l9 9M160 183l-9 9" stroke-width="1.3"/><path d="M186.5 187.5l4 4 8-8.5" stroke-width="2.2"/></g><text x="222" y="192" font-family="Liberation Serif" font-style="italic" font-weight="bold" font-size="14" fill="#444">f</text><text x="226.5" y="192" font-family="Liberation Serif" font-style="italic" font-weight="bold" font-size="10" fill="#444">x</text></svg>
<div style="left:250px;top:172px;width:1111px;height:31px;background:#fff;border:1px solid #c6c6c6"></div>
<div class="t" style="left:263.0px;top:178px;height:20px;line-height:20px;white-space:nowrap;color:#333;font-size:14px;transform:scaleX(1.0765);transform-origin:0 0">=SERIES(ドーナツグラフ!$C$2,ドーナツグラフ!$A$3:$A$8,ドーナツグラフ!$C$3:$C$8,2)</div>
<svg style="left:1346px;top:184px" width="12" height="8"><path d="M2.5 2l3.5 3.5 3.5-3.5" fill="none" stroke="#555" stroke-width="1.7"/></svg>
<div style="left:0px;top:213px;width:917px;height:465px;background:#e6e6e6"></div>
<div style="left:28px;top:237px;width:889px;height:441px;background:#fff"></div>
<svg style="left:0;top:0" width="1366" height="728" viewBox="0 0 1366 728">
<path d="M28 262.5H917" stroke="#d4d4d4"/><path d="M0 262.5H28" stroke="#ababab"/><path d="M28 287.5H917" stroke="#d4d4d4"/><path d="M0 287.5H28" stroke="#ababab"/><path d="M28 312.5H917" stroke="#d4d4d4"/><path d="M0 312.5H28" stroke="#ababab"/><path d="M28 337.5H917" stroke="#d4d4d4"/><path d="M0 337.5H28" stroke="#ababab"/><path d="M28 362.5H917" stroke="#d4d4d4"/><path d="M0 362.5H28" stroke="#ababab"/><path d="M28 387.5H917" stroke="#d4d4d4"/><path d="M0 387.5H28" stroke="#ababab"/><path d="M28 412.5H917" stroke="#d4d4d4"/><path d="M0 412.5H28" stroke="#ababab"/><path d="M28 437.5H917" stroke="#d4d4d4"/><path d="M0 437.5H28" stroke="#ababab"/><path d="M28 462.5H917" stroke="#d4d4d4"/><path d="M0 462.5H28" stroke="#ababab"/><path d="M28 487.5H917" stroke="#d4d4d4"/><path d="M0 487.5H28" stroke="#ababab"/><path d="M28 512.5H917" stroke="#d4d4d4"/><path d="M0 512.5H28" stroke="#ababab"/><path d="M28 537.5H917" stroke="#d4d4d4"/><path d="M0 537.5H28" stroke="#ababab"/><path d="M28 562.5H917" stroke="#d4d4d4"/><path d="M0 562.5H28" stroke="#ababab"/><path d="M28 587.5H917" stroke="#d4d4d4"/><path d="M0 587.5H28" stroke="#ababab"/><path d="M28 612.5H917" stroke="#d4d4d4"/><path d="M0 612.5H28" stroke="#ababab"/><path d="M28 637.5H917" stroke="#d4d4d4"/><path d="M0 637.5H28" stroke="#ababab"/><path d="M28 662.5H917" stroke="#d4d4d4"/><path d="M0 662.5H28" stroke="#ababab"/><path d="M28 687.5H917" stroke="#d4d4d4"/><path d="M0 687.5H28" stroke="#ababab"/><path d="M182.5 237V678" stroke="#d4d4d4"/><path d="M182.5 213V237" stroke="#ababab"/><path d="M265.5 237V678" stroke="#d4d4d4"/><path d="M265.5 213V237" stroke="#ababab"/><path d="M346.5 237V678" stroke="#d4d4d4"/><path d="M346.5 213V237" stroke="#ababab"/><path d="M418.5 237V678" stroke="#d4d4d4"/><path d="M418.5 213V237" stroke="#ababab"/><path d="M490.5 237V678" stroke="#d4d4d4"/><path d="M490.5 213V237" stroke="#ababab"/><path d="M562.5 237V678" stroke="#d4d4d4"/><path d="M562.5 213V237" stroke="#ababab"/><path d="M634.5 237V678" stroke="#d4d4d4"/><path d="M634.5 213V237" stroke="#ababab"/><path d="M706.5 237V678" stroke="#d4d4d4"/><path d="M706.5 213V237" stroke="#ababab"/><path d="M778.5 237V678" stroke="#d4d4d4"/><path d="M778.5 213V237" stroke="#ababab"/><path d="M850.5 237V678" stroke="#d4d4d4"/><path d="M850.5 213V237" stroke="#ababab"/>
</svg>
<div style="left:0px;top:237px;width:917px;height:1px;background:#ababab"></div>
<div style="left:28px;top:213px;width:1px;height:465px;background:#ababab"></div>
<svg style="left:8px;top:217px" width="18" height="17"><path d="M17 0.5V16.5H1z" fill="#b8b8b8"/></svg>
<div style="left:85.0px;top:215px;width:40px;height:20px;line-height:20px;white-space:nowrap;color:#333;font-size:14px;text-align:center;">A</div>
<div style="left:203.5px;top:215px;width:40px;height:20px;line-height:20px;white-space:nowrap;color:#333;font-size:14px;text-align:center;">B</div>
<div style="left:285.5px;top:215px;width:40px;height:20px;line-height:20px;white-space:nowrap;color:#333;font-size:14px;text-align:center;">C</div>
<div style="left:362.0px;top:215px;width:40px;height:20px;line-height:20px;white-space:nowrap;color:#333;font-size:14px;text-align:center;">D</div>
<div style="left:434.0px;top:215px;width:40px;height:20px;line-height:20px;white-space:nowrap;color:#333;font-size:14px;text-align:center;">E</div>
<div style="left:506.0px;top:215px;width:40px;height:20px;line-height:20px;white-space:nowrap;color:#333;font-size:14px;text-align:center;">F</div>
<div style="left:578.0px;top:215px;width:40px;height:20px;line-height:20px;white-space:nowrap;color:#333;font-size:14px;text-align:center;">G</div>
<div style="left:650.0px;top:215px;width:40px;height:20px;line-height:20px;white-space:nowrap;color:#333;font-size:14px;text-align:center;">H</div>
<div style="left:722.0px;top:215px;width:40px;height:20px;line-height:20px;white-space:nowrap;color:#333;font-size:14px;text-align:center;">I</div>
<div style="left:794.0px;top:215px;width:40px;height:20px;line-height:20px;white-space:nowrap;color:#333;font-size:14px;text-align:center;">J</div>
<div style="left:866.0px;top:215px;width:40px;height:20px;line-height:20px;white-space:nowrap;color:#333;font-size:14px;text-align:center;">K</div>
<div style="left:0px;top:239px;width:28px;height:22px;line-height:22px;white-space:nowrap;color:#333;font-size:14px;text-align:center;">1</div>
<div style="left:0px;top:264px;width:28px;height:22px;line-height:22px;white-space:nowrap;color:#333;font-size:14px;text-align:center;">2</div>
<div style="left:0px;top:289px;width:28px;height:22px;line-height:22px;white-space:nowrap;color:#333;font-size:14px;text-align:center;">3</div>
<div style="left:0px;top:314px;width:28px;height:22px;line-height:22px;white-space:nowrap;color:#333;font-size:14px;text-align:center;">4</div>
<div style="left:0px;top:339px;width:28px;height:22px;line-height:22px;white-space:nowrap;color:#333;font-size:14px;text-align:center;">5</div>
<div style="left:0px;top:364px;width:28px;height:22px;line-height:22px;white-space:nowrap;color:#333;font-size:14px;text-align:center;">6</div>
<div style="left:0px;top:389px;width:28px;height:22px;line-height:22px;white-space:nowrap;color:#333;font-size:14px;text-align:center;">7</div>
<div style="left:0px;top:414px;width:28px;height:22px;line-height:22px;white-space:nowrap;color:#333;font-size:14px;text-align:center;">8</div>
<div style="left:0px;top:439px;width:28px;height:22px;line-height:22px;white-space:nowrap;color:#333;font-size:14px;text-align:center;">9</div>
<div style="left:0px;top:464px;width:28px;height:22px;line-height:22px;white-space:nowrap;color:#333;font-size:14px;text-align:center;">10</div>
<div style="left:0px;top:489px;width:28px;height:22px;line-height:22px;white-space:nowrap;color:#333;font-size:14px;text-align:center;">11</div>
<div style="left:0px;top:514px;width:28px;height:22px;line-height:22px;white-space:nowrap;color:#333;font-size:14px;text-align:center;">12</div>
<div style="left:0px;top:539px;width:28px;height:22px;line-height:22px;white-space:nowrap;color:#333;font-size:14px;text-align:center;">13</div>
<div style="left:0px;top:564px;width:28px;height:22px;line-height:22px;white-space:nowrap;color:#333;font-size:14px;text-align:center;">14</div>
<div style="left:0px;top:589px;width:28px;height:22px;line-height:22px;white-space:nowrap;color:#333;font-size:14px;text-align:center;">15</div>
<div style="left:0px;top:614px;width:28px;height:22px;line-height:22px;white-space:nowrap;color:#333;font-size:14px;text-align:center;">16</div>
<div style="left:0px;top:639px;width:28px;height:22px;line-height:22px;white-space:nowrap;color:#333;font-size:14px;text-align:center;">17</div>
<div style="left:0px;top:664px;width:28px;height:22px;line-height:22px;white-space:nowrap;color:#333;font-size:14px;text-align:center;">18</div>
<div style="left:917px;top:213px;width:3px;height:465px;background:#e6e6e6"></div>
<div style="left:916px;top:237px;width:1px;height:441px;background:#9b9b9b"></div>
<div style="left:180px;top:238px;width:4px;height:24px;background:#fff"></div>
<div style="left:29px;top:262px;width:236px;height:25px;background:#fff2cc"></div>
<div style="left:266px;top:262px;width:80px;height:25px;background:#f8dcc4"></div>
<div style="left:29px;top:287px;width:153px;height:150px;background:#f1edf6"></div>
<div style="left:266px;top:287px;width:80px;height:150px;background:#e7eef8"></div>
<svg style="left:0;top:0" width="1366" height="728" viewBox="0 0 1366 728"><path d="M28 287.5H346" stroke="#000"/><path d="M28 312.5H346" stroke="#000"/><path d="M28 337.5H346" stroke="#000"/><path d="M28 362.5H346" stroke="#000"/><path d="M28 387.5H346" stroke="#000"/><path d="M28 412.5H346" stroke="#000"/><path d="M28 437.5H346" stroke="#000"/><path d="M28 262.5H346" stroke="#000"/><path d="M182.5 262V437M265.5 262V437" stroke="#000"/></svg>
<div class="t" style="left:31.7px;top:239px;height:22px;line-height:22px;white-space:nowrap;color:#000;font-size:14px;font-weight:bold;transform:scaleX(1.0714);transform-origin:0 0">商品年間売上エリア別比較</div>
<div class="t" style="left:269.0px;top:239px;height:22px;line-height:22px;white-space:nowrap;color:#000;font-size:14px;transform:scaleX(1.0571);transform-origin:0 0">単位：万円</div>
<div class="t" style="left:83.2px;top:264px;height:22px;line-height:22px;white-space:nowrap;color:#000;font-size:14px;transform:scaleX(1.0476);transform-origin:0 0">エリア</div>
<div class="t" style="left:201.9px;top:264px;height:22px;line-height:22px;white-space:nowrap;color:#000;font-size:14px;transform:scaleX(1.0714);transform-origin:0 0">東日本</div>
<div class="t" style="left:284.6px;top:264px;height:22px;line-height:22px;white-space:nowrap;color:#000;font-size:14px;transform:scaleX(1.0476);transform-origin:0 0">西日本</div>
<div class="t" style="left:31.7px;top:289px;height:22px;line-height:22px;white-space:nowrap;color:#000;font-size:14px;transform:scaleX(1.0586);transform-origin:0 0">昆布つゆ濃縮3倍</div>
<div style="left:183px;top:289px;width:80px;height:22px;line-height:22px;white-space:nowrap;color:#000;font-size:14px;text-align:right;">3500</div>
<div style="left:266px;top:289px;width:78px;height:22px;line-height:22px;white-space:nowrap;color:#000;font-size:14px;text-align:right;">1800</div>
<div class="t" style="left:31.7px;top:314px;height:22px;line-height:22px;white-space:nowrap;color:#000;font-size:14px;transform:scaleX(1.0567);transform-origin:0 0">白だし濃縮2倍</div>
<div style="left:183px;top:314px;width:80px;height:22px;line-height:22px;white-space:nowrap;color:#000;font-size:14px;text-align:right;">1700</div>
<div style="left:266px;top:314px;width:78px;height:22px;line-height:22px;white-space:nowrap;color:#000;font-size:14px;text-align:right;">2900</div>
<div class="t" style="left:31.7px;top:339px;height:22px;line-height:22px;white-space:nowrap;color:#000;font-size:14px;transform:scaleX(1.0567);transform-origin:0 0">冷凍うどん5玉</div>
<div style="left:183px;top:339px;width:80px;height:22px;line-height:22px;white-space:nowrap;color:#000;font-size:14px;text-align:right;">980</div>
<div style="left:266px;top:339px;width:78px;height:22px;line-height:22px;white-space:nowrap;color:#000;font-size:14px;text-align:right;">1200</div>
<div class="t" style="left:31.7px;top:364px;height:22px;line-height:22px;white-space:nowrap;color:#000;font-size:14px;transform:scaleX(1.0540);transform-origin:0 0">冷凍そば3玉</div>
<div style="left:183px;top:364px;width:80px;height:22px;line-height:22px;white-space:nowrap;color:#000;font-size:14px;text-align:right;">1180</div>
<div style="left:266px;top:364px;width:78px;height:22px;line-height:22px;white-space:nowrap;color:#000;font-size:14px;text-align:right;">870</div>
<div class="t" style="left:31.7px;top:389px;height:22px;line-height:22px;white-space:nowrap;color:#000;font-size:14px;transform:scaleX(1.0685);transform-origin:0 0">切り餅1kg</div>
<div style="left:183px;top:389px;width:80px;height:22px;line-height:22px;white-space:nowrap;color:#000;font-size:14px;text-align:right;">980</div>
<div style="left:266px;top:389px;width:78px;height:22px;line-height:22px;white-space:nowrap;color:#000;font-size:14px;text-align:right;">790</div>
<div class="t" style="left:31.7px;top:414px;height:22px;line-height:22px;white-space:nowrap;color:#000;font-size:14px;transform:scaleX(1.0578);transform-origin:0 0">丸餅パック500g</div>
<div style="left:183px;top:414px;width:80px;height:22px;line-height:22px;white-space:nowrap;color:#000;font-size:14px;text-align:right;">580</div>
<div style="left:266px;top:414px;width:78px;height:22px;line-height:22px;white-space:nowrap;color:#000;font-size:14px;text-align:right;">830</div>
<svg style="left:0;top:0" width="1366" height="728" viewBox="0 0 1366 728"><rect x="265.5" y="262.5" width="81" height="25" fill="none" stroke="#c8363b" stroke-width="2"/><rect x="27" y="287" width="155.5" height="150" fill="none" stroke="#8a55c0" stroke-width="2"/><rect x="265.5" y="287" width="81" height="150" fill="none" stroke="#2f6fd0" stroke-width="2"/><rect x="262.5" y="259" width="6" height="6" fill="#c8363b"/><rect x="343.5" y="259" width="6" height="6" fill="#c8363b"/><rect x="179.5" y="284" width="6" height="6" fill="#8a55c0"/><rect x="179.5" y="434" width="6" height="6" fill="#8a55c0"/><rect x="28" y="284" width="6" height="6" fill="#8a55c0"/><rect x="28" y="434" width="6" height="6" fill="#8a55c0"/><rect x="262.5" y="284" width="6" height="6" fill="#2f6fd0"/><rect x="343.5" y="284" width="6" height="6" fill="#2f6fd0"/><rect x="262.5" y="434" width="6" height="6" fill="#2f6fd0"/><rect x="343.5" y="434" width="6" height="6" fill="#2f6fd0"/></svg>
<div style="left:0px;top:237px;width:28px;height:441px;background:#e6e6e6"></div>
<div style="left:0px;top:262px;width:28px;height:1px;background:#ababab"></div>
<div style="left:0px;top:239px;width:28px;height:22px;line-height:22px;white-space:nowrap;color:#222;font-size:14px;text-align:center;">1</div>
<div style="left:0px;top:287px;width:28px;height:1px;background:#ababab"></div>
<div style="left:0px;top:264px;width:28px;height:22px;line-height:22px;white-space:nowrap;color:#222;font-size:14px;text-align:center;">2</div>
<div style="left:0px;top:312px;width:28px;height:1px;background:#ababab"></div>
<div style="left:0px;top:289px;width:28px;height:22px;line-height:22px;white-space:nowrap;color:#222;font-size:14px;text-align:center;">3</div>
<div style="left:0px;top:337px;width:28px;height:1px;background:#ababab"></div>
<div style="left:0px;top:314px;width:28px;height:22px;line-height:22px;white-space:nowrap;color:#222;font-size:14px;text-align:center;">4</div>
<div style="left:0px;top:362px;width:28px;height:1px;background:#ababab"></div>
<div style="left:0px;top:339px;width:28px;height:22px;line-height:22px;white-space:nowrap;color:#222;font-size:14px;text-align:center;">5</div>
<div style="left:0px;top:387px;width:28px;height:1px;background:#ababab"></div>
<div style="left:0px;top:364px;width:28px;height:22px;line-height:22px;white-space:nowrap;color:#222;font-size:14px;text-align:center;">6</div>
<div style="left:0px;top:412px;width:28px;height:1px;background:#ababab"></div>
<div style="left:0px;top:389px;width:28px;height:22px;line-height:22px;white-space:nowrap;color:#222;font-size:14px;text-align:center;">7</div>
<div style="left:0px;top:437px;width:28px;height:1px;background:#ababab"></div>
<div style="left:0px;top:414px;width:28px;height:22px;line-height:22px;white-space:nowrap;color:#222;font-size:14px;text-align:center;">8</div>
<div style="left:0px;top:462px;width:28px;height:1px;background:#ababab"></div>
<div style="left:0px;top:439px;width:28px;height:22px;line-height:22px;white-space:nowrap;color:#222;font-size:14px;text-align:center;">9</div>
<div style="left:0px;top:487px;width:28px;height:1px;background:#ababab"></div>
<div style="left:0px;top:464px;width:28px;height:22px;line-height:22px;white-space:nowrap;color:#222;font-size:14px;text-align:center;">10</div>
<div style="left:0px;top:512px;width:28px;height:1px;background:#ababab"></div>
<div style="left:0px;top:489px;width:28px;height:22px;line-height:22px;white-space:nowrap;color:#222;font-size:14px;text-align:center;">11</div>
<div style="left:0px;top:537px;width:28px;height:1px;background:#ababab"></div>
<div style="left:0px;top:514px;width:28px;height:22px;line-height:22px;white-space:nowrap;color:#222;font-size:14px;text-align:center;">12</div>
<div style="left:0px;top:562px;width:28px;height:1px;background:#ababab"></div>
<div style="left:0px;top:539px;width:28px;height:22px;line-height:22px;white-space:nowrap;color:#222;font-size:14px;text-align:center;">13</div>
<div style="left:0px;top:587px;width:28px;height:1px;background:#ababab"></div>
<div style="left:0px;top:564px;width:28px;height:22px;line-height:22px;white-space:nowrap;color:#222;font-size:14px;text-align:center;">14</div>
<div style="left:0px;top:612px;width:28px;height:1px;background:#ababab"></div>
<div style="left:0px;top:589px;width:28px;height:22px;line-height:22px;white-space:nowrap;color:#222;font-size:14px;text-align:center;">15</div>
<div style="left:0px;top:637px;width:28px;height:1px;background:#ababab"></div>
<div style="left:0px;top:614px;width:28px;height:22px;line-height:22px;white-space:nowrap;color:#222;font-size:14px;text-align:center;">16</div>
<div style="left:0px;top:662px;width:28px;height:1px;background:#ababab"></div>
<div style="left:0px;top:639px;width:28px;height:22px;line-height:22px;white-space:nowrap;color:#222;font-size:14px;text-align:center;">17</div>
<div style="left:0px;top:687px;width:28px;height:1px;background:#ababab"></div>
<div style="left:0px;top:664px;width:28px;height:22px;line-height:22px;white-space:nowrap;color:#222;font-size:14px;text-align:center;">18</div>
<div style="left:28px;top:213px;width:1px;height:465px;background:#ababab"></div>
<svg style="left:0;top:0" width="917" height="728" viewBox="0 0 917 728"><rect x="446.5" y="314.5" width="480" height="287" fill="#fff" stroke="#949494" stroke-width="1.2"/><path d="M685.50 398.00A54.5 54.5 0 0 1 719.61 495.01L703.02 474.34A28 28 0 0 0 685.50 424.50Z" fill="#4472c4" stroke="#fff" stroke-width="1.5"/><path d="M719.61 495.01A54.5 54.5 0 0 1 658.36 499.76L671.56 476.78A28 28 0 0 0 703.02 474.34Z" fill="#ed7d31" stroke="#fff" stroke-width="1.5"/><path d="M658.36 499.76A54.5 54.5 0 0 1 634.48 471.66L659.29 462.34A28 28 0 0 0 671.56 476.78Z" fill="#a5a5a5" stroke="#fff" stroke-width="1.5"/><path d="M634.48 471.66A54.5 54.5 0 0 1 636.96 427.72L660.56 439.77A28 28 0 0 0 659.29 462.34Z" fill="#ffc000" stroke="#fff" stroke-width="1.5"/><path d="M636.96 427.72A54.5 54.5 0 0 1 663.85 402.49L674.38 426.80A28 28 0 0 0 660.56 439.77Z" fill="#5b9bd5" stroke="#fff" stroke-width="1.5"/><path d="M663.85 402.49A54.5 54.5 0 0 1 685.50 398.00L685.50 424.50A28 28 0 0 0 674.38 426.80Z" fill="#70ad47" stroke="#fff" stroke-width="1.5"/><path d="M685.50 370.50A82 82 0 0 1 765.47 434.38L738.65 440.46A54.5 54.5 0 0 0 685.50 398.00Z" fill="#4472c4" stroke="#fff" stroke-width="2.6"/><path d="M765.47 434.38A82 82 0 0 1 655.22 528.71L665.38 503.15A54.5 54.5 0 0 0 738.65 440.46Z" fill="#ed7d31" stroke="#fff" stroke-width="2.6"/><path d="M655.22 528.71A82 82 0 0 1 607.02 476.26L633.34 468.29A54.5 54.5 0 0 0 665.38 503.15Z" fill="#a5a5a5" stroke="#fff" stroke-width="2.6"/><path d="M607.02 476.26A82 82 0 0 1 608.69 423.80L634.45 433.42A54.5 54.5 0 0 0 633.34 468.29Z" fill="#ffc000" stroke="#fff" stroke-width="2.6"/><path d="M608.69 423.80A82 82 0 0 1 637.75 385.84L653.76 408.19A54.5 54.5 0 0 0 634.45 433.42Z" fill="#5b9bd5" stroke="#fff" stroke-width="2.6"/><path d="M637.75 385.84A82 82 0 0 1 685.50 370.50L685.50 398.00A54.5 54.5 0 0 0 653.76 408.19Z" fill="#70ad47" stroke="#fff" stroke-width="2.6"/><path d="M685.50 370.50A82 82 0 0 1 765.47 434.38L738.65 440.46A54.5 54.5 0 0 0 685.50 398.00Z" fill="none" stroke="#838383" stroke-width="1.3"/><path d="M765.47 434.38A82 82 0 0 1 655.22 528.71L665.38 503.15A54.5 54.5 0 0 0 738.65 440.46Z" fill="none" stroke="#838383" stroke-width="1.3"/><path d="M655.22 528.71A82 82 0 0 1 607.02 476.26L633.34 468.29A54.5 54.5 0 0 0 665.38 503.15Z" fill="none" stroke="#838383" stroke-width="1.3"/><path d="M607.02 476.26A82 82 0 0 1 608.69 423.80L634.45 433.42A54.5 54.5 0 0 0 633.34 468.29Z" fill="none" stroke="#838383" stroke-width="1.3"/><path d="M608.69 423.80A82 82 0 0 1 637.75 385.84L653.76 408.19A54.5 54.5 0 0 0 634.45 433.42Z" fill="none" stroke="#838383" stroke-width="1.3"/><path d="M637.75 385.84A82 82 0 0 1 685.50 370.50L685.50 398.00A54.5 54.5 0 0 0 653.76 408.19Z" fill="none" stroke="#838383" stroke-width="1.3"/><circle cx="685.50" cy="398.00" r="3.4" fill="#c9e0f6" stroke="#1b78d8" stroke-width="1.5"/><circle cx="685.50" cy="370.50" r="3.4" fill="#c9e0f6" stroke="#1b78d8" stroke-width="1.5"/><circle cx="738.65" cy="440.46" r="3.4" fill="#c9e0f6" stroke="#1b78d8" stroke-width="1.5"/><circle cx="765.47" cy="434.38" r="3.4" fill="#c9e0f6" stroke="#1b78d8" stroke-width="1.5"/><circle cx="665.38" cy="503.15" r="3.4" fill="#c9e0f6" stroke="#1b78d8" stroke-width="1.5"/><circle cx="655.22" cy="528.71" r="3.4" fill="#c9e0f6" stroke="#1b78d8" stroke-width="1.5"/><circle cx="633.34" cy="468.29" r="3.4" fill="#c9e0f6" stroke="#1b78d8" stroke-width="1.5"/><circle cx="607.02" cy="476.26" r="3.4" fill="#c9e0f6" stroke="#1b78d8" stroke-width="1.5"/><circle cx="634.45" cy="433.42" r="3.4" fill="#c9e0f6" stroke="#1b78d8" stroke-width="1.5"/><circle cx="608.69" cy="423.80" r="3.4" fill="#c9e0f6" stroke="#1b78d8" stroke-width="1.5"/><circle cx="653.76" cy="408.19" r="3.4" fill="#c9e0f6" stroke="#1b78d8" stroke-width="1.5"/><circle cx="637.75" cy="385.84" r="3.4" fill="#c9e0f6" stroke="#1b78d8" stroke-width="1.5"/><circle cx="446.5" cy="314.5" r="4.6" fill="#fff" stroke="#858585" stroke-width="1.7"/><circle cx="685.5" cy="314.5" r="4.6" fill="#fff" stroke="#858585" stroke-width="1.7"/><circle cx="446.5" cy="458" r="4.6" fill="#fff" stroke="#858585" stroke-width="1.7"/><circle cx="446.5" cy="601.5" r="4.6" fill="#fff" stroke="#858585" stroke-width="1.7"/><circle cx="685.5" cy="601.5" r="4.6" fill="#fff" stroke="#858585" stroke-width="1.7"/></svg>
<div class="t" style="left:619.0px;top:325px;height:24px;line-height:24px;white-space:nowrap;color:#595959;font-size:18px;transform:scaleX(1.0228);transform-origin:0 0">グラフ タイトル</div>
<div style="left:534.5px;top:558.5px;width:5px;height:5px;background:#4472c4"></div>
<div class="t" style="left:544.0px;top:552px;height:18px;line-height:18px;white-space:nowrap;color:#595959;font-size:12px;transform:scaleX(0.9814);transform-origin:0 0">昆布つゆ濃縮3倍</div>
<div style="left:638.5px;top:558.5px;width:5px;height:5px;background:#ed7d31"></div>
<div class="t" style="left:648.0px;top:552px;height:18px;line-height:18px;white-space:nowrap;color:#595959;font-size:12px;transform:scaleX(0.9836);transform-origin:0 0">白だし濃縮2倍</div>
<div style="left:741.5px;top:558.5px;width:5px;height:5px;background:#a5a5a5"></div>
<div class="t" style="left:751.0px;top:552px;height:18px;line-height:18px;white-space:nowrap;color:#595959;font-size:12px;transform:scaleX(0.9913);transform-origin:0 0">冷凍うどん5玉</div>
<div style="left:534.5px;top:579.5px;width:5px;height:5px;background:#ffc000"></div>
<div class="t" style="left:544.0px;top:573px;height:18px;line-height:18px;white-space:nowrap;color:#595959;font-size:12px;transform:scaleX(0.9792);transform-origin:0 0">冷凍そば3玉</div>
<div style="left:638.5px;top:579.5px;width:5px;height:5px;background:#5b9bd5"></div>
<div class="t" style="left:648.0px;top:573px;height:18px;line-height:18px;white-space:nowrap;color:#595959;font-size:12px;transform:scaleX(0.9574);transform-origin:0 0">切り餅1kg</div>
<div style="left:741.5px;top:579.5px;width:5px;height:5px;background:#70ad47"></div>
<div class="t" style="left:751.0px;top:573px;height:18px;line-height:18px;white-space:nowrap;color:#595959;font-size:12px;transform:scaleX(0.9688);transform-origin:0 0">丸餅パック500g</div>
<div style="left:920px;top:213px;width:15px;height:465px;background:#e6e6e6"></div>
<div style="left:920px;top:215px;width:15px;height:15px;background:#fff;border:1px solid #ababab"></div>
<div style="left:920px;top:230px;width:15px;height:434px;background:#d9d9d9"></div>
<div style="left:920px;top:230px;width:15px;height:368px;background:#fff;border:1px solid #ababab"></div>
<div style="left:920px;top:664px;width:15px;height:15px;background:#fff;border:1px solid #ababab"></div>
<svg style="left:920px;top:215px" width="15" height="463" viewBox="920 215 15 463"><path d="M923.5 225.5h8l-4-5z" fill="#666"/><path d="M923.5 668h8l-4 5z" fill="#666"/></svg>
<div style="left:935px;top:213px;width:431px;height:493px;background:#e6e6e6"></div>
<div style="left:938px;top:213px;width:1px;height:493px;background:#c6c6c6"></div>
<div class="t" style="left:951.0px;top:226px;height:28px;line-height:28px;white-space:nowrap;color:#217346;font-size:20px;transform:scaleX(0.9700);transform-origin:0 0">データ系列の書式設定</div>
<svg style="left:1290px;top:226px" width="62" height="20" viewBox="1290 226 62 20"><path d="M1296 234h9l-4.5 5z" fill="#777"/><path d="M1337.6 232.3l8.4 8.4M1346 232.3l-8.4 8.4" stroke="#777" stroke-width="2.2"/></svg>
<div class="t" style="left:956.5px;top:264px;height:18px;line-height:18px;white-space:nowrap;color:#222;font-size:12px;font-weight:bold;transform:scaleX(0.8646);transform-origin:0 0">系列のオプション</div>
<svg style="left:1044px;top:268px" width="14" height="10"><path d="M2 2l5 5 5-5" fill="none" stroke="#2b7cd3" stroke-width="1.3"/></svg>
<div style="left:1034px;top:291px;width:30px;height:30px;background:#acacac"></div>
<svg style="left:950px;top:285px" width="120" height="40" viewBox="950 285 120 40"><defs><linearGradient id="pg" x1="0" y1="0" x2="0" y2="1"><stop offset="0" stop-color="#fff"/><stop offset="1" stop-color="#e6e6e6"/></linearGradient></defs>
<path d="M958.2 306.6L966.7 297.2L976.8 305L967.6 315.3z" fill="#fff" stroke="#666" stroke-width="1.2"/>
<path d="M964.3 299.5V296.3a2.2 2.2 0 0 1 4.4 0V302.5" fill="none" stroke="#666" stroke-width="1.1"/><circle cx="968.4" cy="302.6" r="1.2" fill="#666"/>
<path d="M976.2 300.8c2.5 .6 4.6 2.4 4.6 4.8c0 2.5-1.5 4.5-3.2 8.6c-.3-2.6-.4-5.5-1.2-8.6z" fill="#666"/>
<path d="M1003.3 312.8h12.3v4.5h-12.3z" fill="url(#pg)"/>
<path d="M1009.3 294.3L1019 301.8L1015.5 312.8H1003.2L999.6 301.8z" fill="#fff" stroke="#666" stroke-width="1.1"/>
<path d="M1003.2 312.8H1015.5" stroke="#666" stroke-width="1.9"/><path d="M1003.2 313l-1.2 4.2M1015.5 313l1.2 4.2" stroke="#888" stroke-width="1"/>
<rect x="1039.2" y="301" width="5.7" height="15" fill="#217346"/><rect x="1046.2" y="294.8" width="5.8" height="21.2" fill="#217346"/><rect x="1053.3" y="297.9" width="5.7" height="18.1" fill="#217346"/>
</svg>
<svg style="left:950px;top:325px" width="410" height="13" viewBox="950 325 410 13"><path d="M952 335.5H1043.2l5.8-7.8 5.8 7.8H1352" fill="none" stroke="#c6c6c6" stroke-width="1.1"/></svg>
<svg style="left:958px;top:344px" width="10" height="10"><path d="M8.5 1.5v7h-7z" fill="#444"/></svg>
<div class="t" style="left:973.5px;top:340px;height:18px;line-height:18px;white-space:nowrap;color:#217346;font-size:12px;font-weight:bold;transform:scaleX(0.8646);transform-origin:0 0">系列のオプション</div>
<div class="t" style="left:973.5px;top:364px;height:18px;line-height:18px;white-space:nowrap;color:#333;font-size:12px;transform:scaleX(0.9106);transform-origin:0 0">グラフの基線位置(<u>A</u>)</div>
<div class="t" style="left:973.5px;top:409px;height:18px;line-height:18px;white-space:nowrap;color:#333;font-size:12px;transform:scaleX(0.8008);transform-origin:0 0">ドーナツ グラフの切り離し</div>
<div class="t" style="left:973.5px;top:454px;height:18px;line-height:18px;white-space:nowrap;color:#333;font-size:12px;transform:scaleX(0.8634);transform-origin:0 0">ドーナツの穴の大きさ(<u>D</u>)</div>
<svg style="left:0;top:0" width="1366" height="728" viewBox="0 0 1366 728"><path d="M983 390.5H1239" stroke="#a6a6a6"/><path d="M983.5 386.0V395.0" stroke="#666" stroke-width="1.6"/><path d="M983 435.5H1239" stroke="#a6a6a6"/><path d="M983.5 431.0V440.0" stroke="#666" stroke-width="1.6"/><path d="M983 480.5H1239" stroke="#a6a6a6"/><path d="M983 480.5H1077" stroke="#666" stroke-width="2"/><path d="M1077.5 474V487" stroke="#666" stroke-width="1.6"/></svg>
<div style="left:1245px;top:380px;width:87px;height:23px;background:#fff;border:1px solid #ababab"></div>
<div style="left:1252px;top:383px;height:17px;line-height:17px;white-space:nowrap;color:#333;font-size:13px;">0°</div>
<svg style="left:1318px;top:383px" width="10" height="17"><path d="M2 5l3-3 3 3M2 12l3 3 3-3" fill="none" stroke="#555" stroke-width="1"/></svg>
<div style="left:1245px;top:425px;width:87px;height:23px;background:#fff;border:1px solid #ababab"></div>
<div style="left:1252px;top:428px;height:17px;line-height:17px;white-space:nowrap;color:#333;font-size:13px;">0%</div>
<svg style="left:1318px;top:428px" width="10" height="17"><path d="M2 5l3-3 3 3M2 12l3 3 3-3" fill="none" stroke="#555" stroke-width="1"/></svg>
<div style="left:1245px;top:470px;width:87px;height:23px;background:#fff;border:1px solid #ababab"></div>
<div style="left:1252px;top:473px;height:17px;line-height:17px;white-space:nowrap;color:#333;font-size:13px;">33%</div>
<svg style="left:1318px;top:473px" width="10" height="17"><path d="M2 5l3-3 3 3M2 12l3 3 3-3" fill="none" stroke="#555" stroke-width="1"/></svg>
<svg style="left:1060px;top:455px" width="140" height="50" viewBox="1060 455 140 50"><defs><filter id="ash" x="-20%" y="-50%" width="140%" height="200%"><feGaussianBlur stdDeviation="2"/></filter></defs>
<path d="M1079 484.5L1105 473L1103 479L1186 483L1186 485L1103 491.5L1105 496z" fill="#000" opacity="0.25" filter="url(#ash)"/>
<path d="M1077 481.5L1103 470L1100.7 476.5L1184 480.3Q1185.5 481.3 1184 482.5L1100.7 488L1103 493z" fill="#ff0000"/></svg>
<svg style="left:1100px;top:482px" width="64" height="62" viewBox="1100 482 64 62"><defs><filter id="sh" x="-30%" y="-30%" width="160%" height="160%"><feGaussianBlur stdDeviation="1.8"/></filter>
<radialGradient id="c7" cx="50%" cy="45%" r="60%"><stop offset="0" stop-color="#ececec"/><stop offset="1" stop-color="#d6d6d6"/></radialGradient></defs>
<circle cx="1132" cy="513.5" r="20.5" fill="#000" opacity="0.3" filter="url(#sh)"/>
<circle cx="1131.4" cy="511.6" r="20.3" fill="#fff"/><circle cx="1131.4" cy="511.6" r="16.6" fill="url(#c7)"/><circle cx="1131.4" cy="511.6" r="17.4" fill="none" stroke="#ff0000" stroke-width="1.4"/>
<text x="1131" y="521" text-anchor="middle" font-family="Liberation Sans" font-weight="bold" font-size="27" fill="#ff0000" stroke="#fff" stroke-width="2.5" paint-order="stroke" transform="translate(1131 521) scale(1.1 1) translate(-1131 -521)">7</text></svg>
<div style="left:0px;top:678px;width:935px;height:28px;background:#e6e6e6"></div>
<div style="left:0px;top:678px;width:917px;height:1px;background:#a6a6a6"></div>
<svg style="left:20px;top:684px" width="50" height="16"><path d="M10 4.5v7l-4-3.5z" fill="#c6c6c6"/><path d="M36 4.5v7l4-3.5z" fill="#c6c6c6"/></svg>
<div style="left:100px;top:685px;width:1px;height:20px;background:#8a8a8a"></div>
<div class="t" style="left:112.8px;top:683px;height:18px;line-height:18px;white-space:nowrap;color:#444;font-size:13px;transform:scaleX(0.8077);transform-origin:0 0">棒グラフ</div>
<div style="left:167px;top:678px;width:96px;height:24px;background:#fff;border-left:1px solid #c6c6c6;border-right:1px solid #c6c6c6"></div>
<div style="left:168px;top:700px;width:95px;height:2px;background:#217346"></div>
<div class="t" style="left:180.5px;top:683px;height:18px;line-height:18px;white-space:nowrap;color:#217346;font-size:13px;transform:scaleX(0.7582);transform-origin:0 0">ドーナツグラフ</div>
<svg style="left:294px;top:682px" width="20" height="20"><circle cx="10" cy="10" r="7.5" fill="none" stroke="#666" stroke-width="1.2"/><path d="M10 6v8M6 10h8" stroke="#666" stroke-width="1.4"/></svg>
<svg style="left:560px;top:682px" width="10" height="20"><circle cx="4" cy="5" r=".9" fill="#aaa"/><circle cx="4" cy="9" r=".9" fill="#aaa"/><circle cx="4" cy="13" r=".9" fill="#aaa"/></svg>
<div style="left:580px;top:685px;width:337px;height:15px;background:#d9d9d9;border:1px solid #ababab"></div>
<div style="left:580px;top:685px;width:15px;height:15px;background:#fff;border:1px solid #ababab"></div>
<div style="left:594px;top:685px;width:264px;height:15px;background:#fff;border:1px solid #ababab"></div>
<div style="left:902px;top:685px;width:15px;height:15px;background:#fff;border:1px solid #ababab"></div>
<svg style="left:580px;top:685px" width="337" height="14" viewBox="580 685 337 14"><path d="M590 689v7l-4-3.5z" fill="#666"/><path d="M907 689v7l4-3.5z" fill="#666"/></svg>
<div style="left:0px;top:706px;width:1366px;height:22px;background:#f3f2f1"></div>
<div style="left:0px;top:706px;width:1366px;height:1px;background:#d6d6d6"></div>
<svg style="left:6px;top:709px" width="16" height="16"><g fill="none" stroke="#444" stroke-width="1"><path d="M1.5 2.5h12M1.5 2.5v11h5"/><path d="M3.5 5h8M3.5 7.5h3M3.5 10h3"/><circle cx="11" cy="10.5" r="3.5"/></g><circle cx="11" cy="10.5" r="1.8" fill="#444"/></svg>
<div class="t" style="left:777.5px;top:708px;height:18px;line-height:18px;white-space:nowrap;color:#444;font-size:12px;transform:scaleX(1.0835);transform-origin:0 0">平均: 1442.5</div>
<div class="t" style="left:872.2px;top:708px;height:18px;line-height:18px;white-space:nowrap;color:#444;font-size:12px;transform:scaleX(0.9238);transform-origin:0 0">データの個数: 21</div>
<div class="t" style="left:972.5px;top:708px;height:18px;line-height:18px;white-space:nowrap;color:#444;font-size:12px;transform:scaleX(1.0773);transform-origin:0 0">合計: 17310</div>
<div style="left:1060px;top:706px;width:40px;height:22px;background:#c8c8c8"></div>
<svg style="left:1060px;top:706px" width="200" height="22" viewBox="1060 706 200 22"><g fill="none" stroke="#333" stroke-width="1">
<rect x="1073.5" y="710.5" width="12" height="12"/><path d="M1077.5 710.5v12M1081.5 710.5v12M1073.5 714.5h12M1073.5 718.5h12"/>
<rect x="1113.5" y="710.5" width="12" height="12"/><rect x="1115.5" y="712.5" width="8" height="8"/><path d="M1117 714.5h5M1117 716.5h5M1117 718.5h5"/>
<rect x="1153.5" y="710.5" width="12.5" height="12"/><path d="M1157.5 710.5v6.5M1153.5 717h8v-6.5"/>
</g></svg>
<svg style="left:1180px;top:706px" width="140" height="22" viewBox="1180 706 140 22"><path d="M1186 717h8" stroke="#444" stroke-width="1.2"/><path d="M1199 717.5h100" stroke="#9a9a9a"/><rect x="1246" y="711" width="5" height="12" fill="#666"/><path d="M1303 717h9M1307.5 712.5v9" stroke="#444" stroke-width="1.2"/></svg>
<div class="t" style="left:1325.0px;top:708px;height:18px;line-height:18px;white-space:nowrap;color:#444;font-size:12px;transform:scaleX(1.0422);transform-origin:0 0">100%</div>
<script>(function(){var W=[162.0,26.0,54.0,37.6,33.7,26.0,26.5,87.0,26.0,33.0,27.0,26.0,27.0,33.5,51.0,75.6,86.5,26.5,26.5,41.5,80.1,65.3,30.2,25.2,24.0,50.2,33.1,33.2,45.2,22.5,24.4,40.6,42.3,39.5,24.8,59.5,34.5,36.1,24.2,56.0,611.0,180.0,74.0,44.0,45.0,44.0,112.0,97.0,97.0,82.0,69.0,107.0,134.0,89.0,77.4,78.0,65.3,53.0,84.0,194.0,83.0,83.0,102.0,118.0,118.0,42.0,69.0,73.0,85.0,69.0,32.0];var e=document.querySelectorAll(".t");for(var i=0;i<e.length&&i<W.length;i++){var s=e[i].style;s.transform="none";var w=e[i].getBoundingClientRect().width;if(w>0)s.transform="scaleX("+(W[i]/w).toFixed(4)+")";else s.transform="";}})();</script></body></html>
